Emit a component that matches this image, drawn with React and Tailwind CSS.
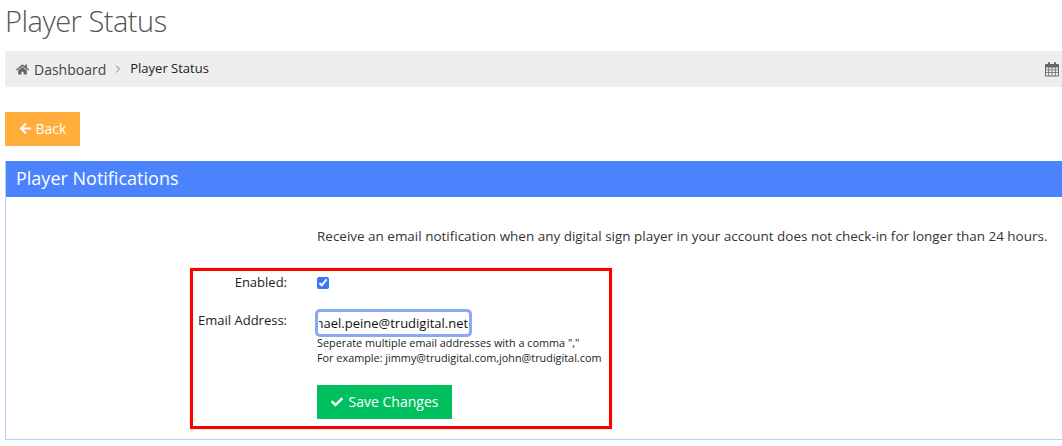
import React, { useEffect, useRef } from 'react';
import { FaHome, FaArrowLeft, FaCheck } from 'react-icons/fa';
import { LuChevronRight } from 'react-icons/lu';

const CalendarIcon = () => (
  <svg width="14" height="15" viewBox="0 0 14 15" className="text-[#666]">
    <path fill="currentColor" fillRule="evenodd" d="M1 2h2V1a1 1 0 0 1 2 0v1h4V1a1 1 0 0 1 2 0v1h2a1 1 0 0 1 1 1v10.500a1 1 0 0 1-1 1H1a1 1 0 0 1-1-1V3a1 1 0 0 1 1-1zM1 5.500v2h2.300v-2zM4.100 5.500v2h2.500v-2zM7.400 5.500v2h2.500v-2zM10.700 5.500v2H13v-2zM1 8.300v2h2.300v-2zM4.100 8.300v2h2.500v-2zM7.400 8.300v2h2.500v-2zM10.700 8.300v2H13v-2zM1 11.100v2.400h2.300v-2.400zM4.100 11.100v2.400h2.500v-2.400zM7.400 11.100v2.400h2.500v-2.400zM10.700 11.100v2.400H13v-2.400z" />
  </svg>
);

export default function App() {
  const emailRef = useRef(null);

  useEffect(() => {
    if (emailRef.current) emailRef.current.scrollLeft = emailRef.current.scrollWidth;
  }, []);

  return (
    <div className="h-[446px] overflow-hidden bg-white pl-[5px] font-['Open_Sans',sans-serif] text-[13.47px] text-[#333]">
      <h1 className="h-[51px] text-[29px] font-light leading-[42px] tracking-[-0.5px] text-[#555]">Player Status</h1>

      <div className="flex h-9 items-center justify-between bg-[#eeeeee] pl-[11px] pr-[3px]">
        <div className="flex items-center">
          <FaHome className="mr-[5px] text-[13px] text-[#666]" />
          <span className="text-[14px] text-[#444]">Dashboard</span>
          <LuChevronRight className="mx-[6px] text-[12px] text-[#777]" />
          <span className="text-[13px] text-[#222]">Player Status</span>
        </div>
        <CalendarIcon />
      </div>

      <button type="button" className="mt-[25px] flex h-[34px] w-[75px] items-center justify-center gap-1 bg-[#ffad3b] pb-[1px] text-[14px] text-white">
        <FaArrowLeft className="text-[13px]" />
        Back
      </button>

      <section className="mt-[15px] h-[279px] border border-t-0 border-r-0 border-[#b9cffb]">
        <h2 className="flex h-9 items-center bg-[#4a83fd] pb-[1px] pl-[10px] text-[18px] font-normal text-white">Player Notifications</h2>

        <p className="mt-[29px] ml-[311px] whitespace-nowrap leading-5 text-[#333]">
          Receive an email notification when any digital sign player in your account does not check-in for longer than 24 hours.
        </p>

        <div className="mt-[22px] ml-[184px] h-[161px] w-[422px] border-[3px] border-[#ff0000] pl-[1px] pt-[1px] shadow-[0_0_1px_#ff8080]">
          <div className="flex">
            <label className="w-[93px] text-right text-[13px] leading-5 text-[#222]">Enabled:</label>
            <input type="checkbox" defaultChecked className="ml-[30px] mt-[5px] h-3 w-3 accent-[#3b78f6]" />
          </div>

          <div className="mt-[18px] flex">
            <label className="w-[93px] text-right text-[13px] leading-5 text-[#222]">Email Address:</label>
            <div className="ml-[30px] flex flex-col items-start">
              <input
                ref={emailRef}
                type="text"
                readOnly
                defaultValue="michael.peine@trudigital.net"
                className="ml-[1px] mt-[2px] h-[22px] w-[151px] rounded-[2px] bg-white px-[1px] text-[13px] text-[#111] outline-none ring-[3px] ring-[#8aa8f7]"
              />
              <p className="mt-[1px] whitespace-nowrap text-[10.85px] leading-[15px] text-[#222]">
                Seperate multiple email addresses with a comma ","
                <br />
                For example: jimmy@trudigital.com,john@trudigital.com
              </p>
              <button type="button" className="mt-[20px] flex h-[34px] w-[135px] items-center justify-center gap-[6px] bg-[#00bf5f] pb-[1px] text-[14px] text-white">
                <FaCheck className="text-[12px]" />
                Save Changes
              </button>
            </div>
          </div>
        </div>
      </section>
    </div>
  );
}
